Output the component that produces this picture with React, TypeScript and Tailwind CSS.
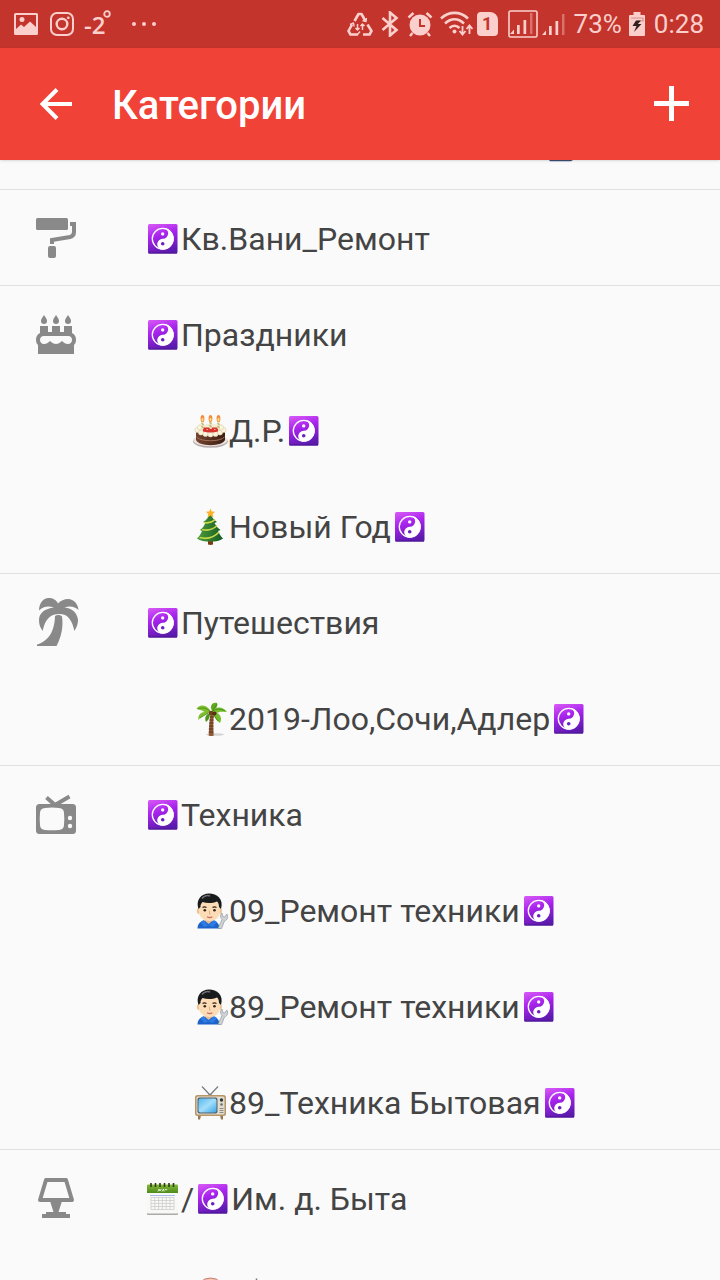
import type { ReactNode } from 'react';

type EmojiName = 'yin' | 'cake' | 'tree' | 'palm' | 'mechanic' | 'tv' | 'calendar' | 'face' | 'tip';
type IconName = 'roller' | 'cake' | 'palm' | 'tv' | 'lamp';
type Part = { e: EmojiName } | string;

interface Category { icon: IconName; title: Part[]; children: Part[][]; }

const yin: Part = { e: 'yin' };

const CATEGORIES: Category[] = [
  { icon: 'roller', title: [yin, 'Кв.Вани_Ремонт'], children: [] },
  { icon: 'cake', title: [yin, 'Праздники'], children: [[{ e: 'cake' }, 'Д.Р.', yin], [{ e: 'tree' }, 'Новый Год', yin]] },
  { icon: 'palm', title: [yin, 'Путешествия'], children: [[{ e: 'palm' }, '2019-Лоо,Сочи,Адлер', yin]] },
  {
    icon: 'tv',
    title: [yin, 'Техника'],
    children: [
      [{ e: 'mechanic' }, '09_Ремонт техники', yin],
      [{ e: 'mechanic' }, '89_Ремонт техники', yin],
      [{ e: 'tv' }, '89_Техника Бытовая', yin],
    ],
  },
  { icon: 'lamp', title: [{ e: 'calendar' }, '/', yin, 'Им. д. Быта'], children: [[{ e: 'face' }, { e: 'tip' }]] },
];

const EMOJI: Record<EmojiName, ReactNode> = {
  yin: (
    <>
      <rect x="4" y="4" width="29.500" height="29.500" rx="1.500" fill="url(#yinBg)" />
      <path d="M4.500 33h28.500" stroke="#4a1590" strokeWidth="1" />
      <circle cx="18.700" cy="18.800" r="10.400" fill="none" stroke="#fff" strokeWidth="1.300" />
      <path d="M18.700 7.800a11 11 0 0 1 0 22a5.500 5.500 0 0 1 0-11a5.500 5.500 0 0 0 0-11z" fill="#fff" />
      <circle cx="18.700" cy="13.900" r="1.700" fill="#fff" />
      <circle cx="18.700" cy="23.700" r="1.800" fill="#6a22c0" />
    </>
  ),
  cake: (
    <>
      <ellipse cx="18.500" cy="29.300" rx="17.500" ry="6.500" fill="#b9aeae" />
      <ellipse cx="18.500" cy="28.200" rx="17" ry="6" fill="#e9e2e0" />
      <path d="M4 18v10c1 3 7 5.200 14.500 5.200S32 31 33 28V18z" fill="url(#choco)" />
      <path d="M4.500 25c4 5 24 5 28 0" fill="none" stroke="#a0705a" strokeWidth="1" />
      <ellipse cx="18.500" cy="17.500" rx="14.500" ry="5.500" fill="#f3ead2" />
      {[[5.500, 18], [9, 20.500], [13.500, 22], [18.500, 22.400], [23.500, 22], [28, 20.500], [31.500, 18], [8, 15.500], [29, 15.500]].map(([x, y]) => (
        <circle key={`${x}-${y}`} cx={x} cy={y} r="2.600" fill="#fbf4df" stroke="#d6c49a" strokeWidth=".5" />
      ))}
      <path d="M11 15.500h15v4q-7.500 2-15 0z" fill="#d8342e" />
      <path d="M14.500 17.500h1.500m2-1h2m2 1h1.500" stroke="#ffb0a0" strokeWidth="1.200" />
      <path d="M10.500 9v8M18.500 8.500v8M26.500 9v8" stroke="#e9dfae" strokeWidth="2.400" />
      <path d="M9.500 11l2 2m-2 1l2 2m6-6l2 2m-2 1l2 2m6-4l2 2m-2 1l2 2" stroke="#7f9b4a" strokeWidth=".8" />
      {[10.500, 18.500, 26.500].map(x => (
        <g key={x}>
          <ellipse cx={x} cy="6.500" rx="1.900" ry="3.500" fill="#f28a3a" />
          <ellipse cx={x} cy="7.500" rx="1" ry="1.800" fill="#ffe27a" />
        </g>
      ))}
    </>
  ),
  tree: (
    <>
      <path d="M16 31h5v5.500q-2.500.8-5 0z" fill="#7a3b17" />
      <path d="M18 5c2 5 4.500 7 7 9l-2.500 1c2 4 4 5.500 6 7l-2.500 1c1.500 3.500 3 5.500 5 7.500-3 2.500-7 3-12.500 3S8 33 5 30.500c2-2 3.800-4 5-7.500l-2-1c2.500-2 4-4 5.500-7L11 14c3.500-2 5.500-4.500 7-9z" fill="url(#fir)" />
      <path d="M12 14.500c5 1 8 0 11-3M10 21.500c6 1.500 11 0 15-4M7.500 29.500c8 2 15-.5 19.500-5.500" fill="none" stroke="#c6d84a" strokeWidth="1.700" />
      <path d="M18.500.5l1.300 3 3.400.3-2.500 2.200.8 3.400-3-1.800-3 1.800.8-3.400-2.500-2.200 3.400-.3z" fill="#ffb229" />
    </>
  ),
  palm: (
    <>
      <ellipse cx="23" cy="34.500" rx="9" ry="1.300" fill="#d4d4d4" />
      <path d="M18.500 13h3.500c-.8 7-.8 15-.3 22.500q-2.500 1-5 0c.3-8 .8-15 1.800-22.500z" fill="#8f5a35" />
      <path d="M18 17h4m-4.500 3h4m-4.300 3h4.300m-4.500 3h4.300m-4.500 3h4.500m-4.500 3h4.500" stroke="#5c3218" strokeWidth="1" />
      <path d="M19 12C15 4 7 4 4.500 9c3 .5 5 1 8 3-4 0-7 4-6 8 2-3 7-6 12.500-8z" fill="#7fbf2b" />
      <path d="M20 11c-3-6 1-9 5-8 1 3-.5 6-5 8z" fill="#62a91f" />
      <path d="M20 12c3-6 11-6 15 0-5-.5-8-.5-10 1 4 2 5 6 3 10-3-2-6-6-8-11z" fill="#76bd2b" />
      <path d="M18 13c-4 1-6 5-4 9 3-2 4-5 4-9z" fill="#4d941c" />
      <path d="M6 9c4-2 9-1 13 3 4-3 9-4 14-1M25 4l-5 8m1 2l5 7m-18-3l8-5" fill="none" stroke="#3f861b" strokeWidth=".8" />
      <circle cx="19" cy="13" r="2.300" fill="#70401f" />
      <circle cx="22.500" cy="13.500" r="2" fill="#593014" />
    </>
  ),
  mechanic: (
    <>
      <path d="M5.500 36.500c0-5 3-7.500 8-8h6c5 .5 8 3 8 8z" fill="#1e63c8" />
      <path d="M12 28l4.500 4 5-4v-3h-9.500z" fill="#e9bd93" />
      <path d="M11.500 28l4.500 5.500 6-5.500 3 2-4 5-4.500-1.500-4.500 1.500-3.500-5z" fill="#2d7ce6" />
      <ellipse cx="6.800" cy="19" rx="2" ry="3" fill="#efc49a" />
      <ellipse cx="28" cy="19" rx="2" ry="3" fill="#efc49a" />
      <path d="M7 14c0-6 4-9 10.500-9S28 8 28 14v6c0 5-5 9-10.500 9S7 25 7 20z" fill="#fbdcb6" />
      <path d="M6.500 17C3.500 8 9 1.500 17 1.500S32 7 29 17l-2-2c0-3-.8-4.500-2-5.500-5 2-10 2-14.500.5-1.500 1.500-2 3-2 5z" fill="#191b1d" />
      <path d="M10 6.500c2-3 6-3.500 8-2.500" stroke="#6d7276" strokeWidth="1.500" fill="none" />
      <path d="M10.500 15.500q2-1.200 4 0M20.500 15.500q2-1.200 4 0" stroke="#33231a" strokeWidth="1.200" fill="none" />
      <circle cx="12.800" cy="18.300" r="1.300" fill="#33231a" />
      <circle cx="22.500" cy="18.300" r="1.300" fill="#33231a" />
      <path d="M17.500 18.500v3.500h1" stroke="#e0ab80" strokeWidth="1" fill="none" />
      <path d="M15 24.800q2.700 1.500 5.300 0" stroke="#c56e60" strokeWidth="1.300" fill="none" />
      <path d="M26 36.500l4-9c-2-2-2-5 0-6.500l.8 3.500 2 .5 2-3c1.800 3 .5 6-2.300 7l-3 7.500z" fill="#cfd3d6" stroke="#8f969b" strokeWidth=".7" />
    </>
  ),
  tv: (
    <>
      <path d="M10 2.500l8 8.500 8-8.500" fill="none" stroke="#777b80" strokeWidth="1.200" />
      <path d="M15 11.500q3-3 6 0z" fill="#777b80" />
      <path d="M6 31.500h3l-1 4H6zM28 31.500h3v4h-2z" fill="#9a7a55" />
      <rect x="3" y="11" width="31" height="21" rx="2.500" fill="#b79668" />
      <rect x="4.500" y="12.500" width="28" height="18" rx="1.500" fill="#e3ddd0" />
      <rect x="5.500" y="13.500" width="20" height="16" rx="2" fill="#50606a" />
      <rect x="6.500" y="14.500" width="18" height="14" rx="2" fill="url(#screen)" />
      <circle cx="29.500" cy="16" r="1.700" fill="#30363a" />
      <circle cx="29.500" cy="20.500" r="1.300" fill="#6a6f73" />
      <path d="M27.500 24.500h4m-4 2h4m-4 2h4" stroke="#85827c" strokeWidth=".9" />
    </>
  ),
  calendar: (
    <>
      <rect x="3" y="5" width="31" height="30" rx="1" fill="#aaa" />
      <rect x="3" y="5" width="31" height="28.500" rx="1" fill="#f8f8f6" />
      <path d="M3 5.500q0-1 1-1h29q1 0 1 1V13H3z" fill="url(#calTop)" />
      <path d="M7 3v4m4.500-4v4M16 3v4m4.500-4v4M25 3v4m4.500-4v4" stroke="#2c3b1b" strokeWidth="1.600" />
      <path d="M14 11.500l1-2.500 1 2 1.300-2M18 11.500l1.500-2.500.6 2.500m1-2.500l1 1.200 1-1.200" fill="none" stroke="#fff" strokeWidth=".8" />
      <path d="M6 15.500h25" stroke="#a8b9ef" strokeWidth="1" />
      <path d="M7 17.500h23v12H7zM7 20.500h23M7 23.500h23M7 26.500h23M10.800 17.500v12M14.600 17.500v12M18.400 17.500v12M22.200 17.500v12M26 17.500v12" fill="none" stroke="#c9c9c9" strokeWidth=".7" />
    </>
  ),
  face: <circle cx="18.500" cy="17" r="15" fill="#f4c8b4" stroke="#c9786a" strokeWidth="1" />,
  tip: <path d="M27.500 2.500v4" stroke="#777" strokeWidth="1.500" />,
};

const ICONS: Record<IconName, ReactNode> = {
  roller: (
    <>
      <rect x="4" y="4" width="32" height="12" rx="1.500" />
      <path d="M38 10h4v8q0 4-4 5l-18 3v4" fill="none" stroke="#898989" strokeWidth="4" />
      <rect x="16" y="32" width="8" height="12" rx="2" />
    </>
  ),
  cake: (
    <>
      {[12, 24, 36].map(x => (
        <path key={x} d={`M${x} 5c2 3 3 4.500 3 6a3 3 0 0 1-6 0c0-1.500 1-3 3-6z`} />
      ))}
      <path d="M8 16h8v6h4v-6h8v6h4v-6h8v7c3 1.500 4 4 4 7 0 2-.8 4-2 5v9H6v-9c-1.200-1-2-3-2-5 0-3 1-5.500 4-7z" />
      <path d="M12 26h24c3 0 4 2 4 4s-1.500 4-4 4-4-1-6-3c-2 2-4 3-6 3s-4-1-6-3c-2 2-3.500 3-6 3s-4-2-4-4 1-4 4-4z" fill="#fafafa" />
    </>
  ),
  palm: (
    <>
      <path d="M7 12.500C7 4.500 12 0 16.500 0c4.500 0 8 2 9.500 5.500C28.500 2.500 32.500 1 36 1c6 0 10 5 10.500 11-3.500-3.500-8.500-4.500-14-2.500 8 .5 13 6 13.500 12.500 0 4-1.500 8-3.700 11C41 25.500 38 19.500 33 17c-5-2-11-.8-14 1-4.500 3-7 8-8.300 15C8 29.500 7 26 7 22c0-7 6-11.500 15-12.500C16 7.500 11 8.500 7 12.500z" />
      <path d="M23 18c2-1.500 5.500-1.500 7 .5 1.500 10-.5 20-5.500 29.500H5v-1.500c10-3 17.500-11 18-28.500z" />
    </>
  ),
  tv: (
    <>
      <path d="M14.500 7.500l8.500 7.500L37.500 6.500" fill="none" stroke="#898989" strokeWidth="4" />
      <rect x="4" y="14" width="40" height="30" rx="3.500" />
      <path d="M13 18q7-.8 14 0 5 .4 5 5 .6 6 0 12 0 4.500-5 5-7 .7-14 0-5-.5-5-5-.6-6 0-12 0-4.500 5-5z" fill="#fafafa" />
      <circle cx="38" cy="28" r="2.200" fill="#fafafa" />
      <circle cx="38" cy="36" r="2.200" fill="#fafafa" />
    </>
  ),
  lamp: (
    <>
      <path d="M14 6h20l6 20H8z" fill="none" stroke="#898989" strokeWidth="4" strokeLinejoin="round" />
      <path d="M18 27h12l-3.500 11H34v2h4v4H10v-4h4v-2h7.500z" />
    </>
  ),
};

function Emoji({ name }: { name: EmojiName }) {
  return <svg viewBox="0 0 37 37" className="h-[37px] w-[37px] shrink-0" aria-hidden="true">{EMOJI[name]}</svg>;
}

function Label({ parts }: { parts: Part[] }) {
  return (
    <span className="flex items-center pt-0.5 whitespace-pre">
      {parts.map((p, i) => (typeof p === 'string' ? <span key={i}>{p}</span> : <Emoji key={i} name={p.e} />))}
    </span>
  );
}

function SignalBars() {
  return (
    <>
      <path d="M2 24l4-4.500V24zM9 15h2.700v9H9zM15.500 10h2.700v14h-2.700z" />
      <path d="M22 3h2.500v21H22z" opacity=".4" />
    </>
  );
}

function StatusBar() {
  return (
    <div className="flex h-12 shrink-0 items-center justify-between bg-[#c3342d] pr-4 pl-3.5 text-[#fbcfcb]">
      <div className="flex items-center">
        <svg viewBox="0 0 24 24" className="h-6 w-6" fill="currentColor" aria-hidden="true">
          <path fillRule="evenodd" d="M1.500 1h21q1.500 0 1.500 1.500v19q0 1.500-1.500 1.500h-21Q0 23 0 21.500v-19Q0 1 1.500 1zM2 3v14l5-4.500 3 2.500 6-5.500 6 5.500V3zM8 5a2.500 2.500 0 1 1 0 5 2.500 2.500 0 0 1 0-5z" />
        </svg>
        <svg viewBox="0 0 24 24" className="ml-3 h-6 w-6" fill="none" stroke="currentColor" strokeWidth="2" aria-hidden="true">
          <rect x="1" y="1" width="22" height="22" rx="6" />
          <circle cx="12" cy="12" r="5.300" strokeWidth="2.400" />
          <circle cx="18.300" cy="5.800" r="1.400" fill="currentColor" stroke="none" />
        </svg>
        <span className="ml-2.5 flex items-start pt-0.5 font-['Open_Sans',sans-serif] text-2xl font-semibold">
          -2
          <svg viewBox="0 0 8 8" className="-ml-0.5 h-2.5 w-2" fill="none" stroke="currentColor" strokeWidth="1.800" aria-hidden="true"><circle cx="4" cy="4" r="2.800" /></svg>
        </span>
        <svg viewBox="0 0 26 6" className="ml-5 h-1.5 w-6.5" fill="currentColor" aria-hidden="true">
          <circle cx="3" cy="3" r="2" /><circle cx="13" cy="3" r="2" /><circle cx="23" cy="3" r="2" />
        </svg>
      </div>
      <div className="flex items-center">
        <svg viewBox="0 0 26 24" className="h-6 w-6.5" fill="none" stroke="currentColor" strokeWidth="2.600" strokeLinejoin="round" aria-hidden="true">
          <path d="M7.500 9l4-7h3l4 7M20.500 12.500l4 6.500-2 3.500H16M11 22.500H3.500L1.500 19l3.500-6.500" />
          <path d="M3 12.500l3.500-1.500.5 3.500M15.500 8.500l3.500 1 .5-3.500M13 19.500l-2.500 3" strokeWidth="1.400" />
          <path d="M10.500 12v6m-2-2l2 2 2-2M15.500 18v-6m-2 2l2-2 2 2" strokeWidth="1.500" />
        </svg>
        <svg viewBox="0 0 18 26" className="ml-2 h-6.5 w-4.5" fill="none" stroke="currentColor" strokeWidth="2.600" aria-hidden="true">
          <path d="M1.500 7l14 12-6.500 5.500v-23L15.500 7l-14 12" />
        </svg>
        <svg viewBox="0 0 26 26" className="ml-2 h-6.5 w-6.5" aria-hidden="true">
          <circle cx="13" cy="14" r="10.500" fill="currentColor" />
          <path d="M1.500 6.500l5-4.500M19.500 2l5 4.500M5.500 22L3 25M20.500 22l2.500 3" stroke="currentColor" strokeWidth="2.500" />
          <path d="M13 8v7h5" fill="none" stroke="#c3342d" strokeWidth="2" />
        </svg>
        <svg viewBox="0 0 34 26" className="ml-1.5 h-6.5 w-8.5" fill="none" stroke="currentColor" strokeWidth="2.600" aria-hidden="true">
          <path d="M2 7.500c8-7.500 19-7.500 27 0M6 12.500c6-5.500 13-5.500 19 0M10.500 17c3-3 7-3 10 0" />
          <circle cx="15.500" cy="20.500" r="2" fill="currentColor" stroke="none" />
          <path d="M23.500 15v8m-3-3l3 3.500 3-3.500M30.500 23v-8m-3 3l3-3.500 3 3.500" strokeWidth="1.800" />
        </svg>
        <span className="ml-1 flex h-6 w-[21px] items-center justify-center rounded-sm rounded-tr-lg bg-[#fbcfcb] text-lg font-bold text-[#c3342d]">1</span>
        <svg viewBox="0 0 30 28" className="ml-2.5 h-7 w-7.5" fill="currentColor" aria-hidden="true">
          <rect x="1" y="1" width="28" height="26" rx="1.500" fill="none" stroke="currentColor" strokeWidth="1.600" />
          <SignalBars />
        </svg>
        <svg viewBox="0 0 26 26" className="ml-0.5 h-6.5 w-6.5" fill="currentColor" aria-hidden="true"><SignalBars /></svg>
        <span className="ml-2 text-[26px]">73%</span>
        <svg viewBox="0 0 18 24" className="ml-1.5 h-6 w-4.5" aria-hidden="true">
          <path d="M5.500 0h7v3H16q1 0 1 1v19q0 1-1 1H2q-1 0-1-1V4q0-1 1-1h3.500z" fill="currentColor" />
          <path d="M3 6h12v3H9" fill="none" stroke="#d98f89" strokeWidth="1.200" />
          <path d="M8 8.500L4.500 14h4L6 20l7.500-8H9.800L13 8.500z" fill="#32201f" />
        </svg>
        <span className="ml-2 text-[26px]">0:28</span>
      </div>
    </div>
  );
}

function Row({ parts, icon, last }: { parts: Part[]; icon?: IconName; last: boolean }) {
  return (
    <button className={'flex h-24 w-full shrink-0 items-center border-b text-left ' + (last ? 'border-[#e0e0e0]' : 'border-transparent')}>
      <span className={icon ? 'w-36 shrink-0 pl-8' : 'w-48 shrink-0'}>
        {icon && <svg viewBox="0 0 48 48" className="h-12 w-12 overflow-visible" fill="#898989" aria-hidden="true">{ICONS[icon]}</svg>}
      </span>
      <Label parts={parts} />
    </button>
  );
}

export default function App() {
  return (
    <div className="flex h-screen flex-col overflow-hidden bg-[#fafafa] font-['Roboto',sans-serif] text-[#444]">
      <svg className="absolute h-0 w-0" aria-hidden="true">
        <defs>
          <linearGradient id="yinBg" x1=".2" y1="0" x2=".5" y2="1">
            <stop offset="0" stopColor="#d455f5" />
            <stop offset=".4" stopColor="#a924ee" />
            <stop offset="1" stopColor="#5a1aac" />
          </linearGradient>
          <linearGradient id="choco" x1="0" x2="1"><stop stopColor="#74452f" /><stop offset="1" stopColor="#3c1d12" /></linearGradient>
          <linearGradient id="fir" x1="0" x2="1"><stop stopColor="#4d9c3a" /><stop offset="1" stopColor="#145c25" /></linearGradient>
          <linearGradient id="screen" x1="0" x2="1" y2="1"><stop stopColor="#56b8f0" /><stop offset=".5" stopColor="#a3defa" /><stop offset="1" stopColor="#3aa5e8" /></linearGradient>
          <linearGradient id="calTop" x1="0" x2="0" y2="1"><stop stopColor="#86bb38" /><stop offset="1" stopColor="#4c8a1c" /></linearGradient>
        </defs>
      </svg>
      <StatusBar />
      <header className="z-10 flex h-28 shrink-0 items-center bg-[#f04237] px-8 text-white shadow-sm">
        <button aria-label="Назад">
          <svg viewBox="0 0 48 48" className="h-12 w-12" fill="none" stroke="currentColor" strokeWidth="4" aria-hidden="true">
            <path d="M40 24H11M25 9.500L10.500 24 25 38.500" />
          </svg>
        </button>
        <h1 className="ml-8 flex-1 pt-1 text-[40px] font-medium">Категории</h1>
        <button aria-label="Добавить" className="-mr-2">
          <svg viewBox="0 0 48 48" className="h-12 w-12" fill="none" stroke="currentColor" strokeWidth="5" aria-hidden="true">
            <path d="M23.500 6v35M6 23.500h35" />
          </svg>
        </button>
      </header>
      <main className="min-h-0 flex-1 overflow-hidden text-[32px]">
        <div className="flex h-[30px] items-start border-b border-[#e0e0e0] pl-[548px]">
          <svg viewBox="0 0 26 2" className="h-0.5 w-6.5" aria-hidden="true"><path d="M1 0h24l-2 1.200H2z" fill="#3c5078" /></svg>
        </div>
        <ul>
          {CATEGORIES.map(c => (
            <li key={c.icon}>
              <Row parts={c.title} icon={c.icon} last={c.children.length === 0} />
              {c.children.map((parts, i) => <Row key={i} parts={parts} last={i === c.children.length - 1} />)}
            </li>
          ))}
        </ul>
      </main>
    </div>
  );
}
